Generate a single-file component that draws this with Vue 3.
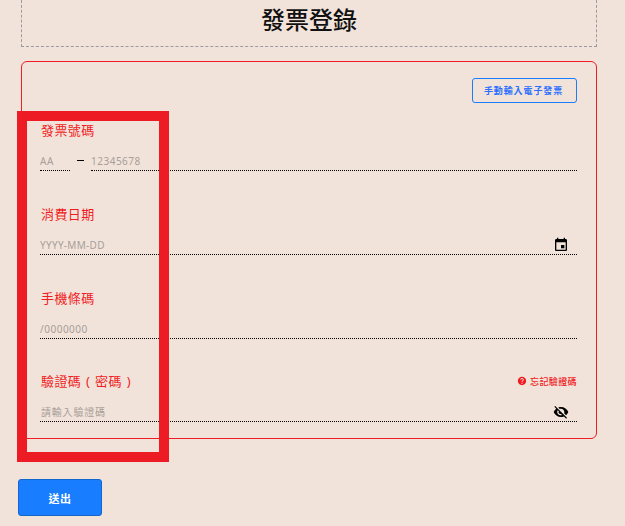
<template>
  <div class="page">
    <header class="title-box">
      <h1>發票登錄</h1>
    </header>

    <form class="card" @submit.prevent>
      <div class="card-top">
        <button type="button" class="manual-btn">手動輸入電子發票</button>
      </div>

      <div class="field field-first">
        <label>發票號碼</label>
        <div class="inv-row">
          <div class="line inv-track"><span class="hint">AA</span></div>
          <span class="dash"></span>
          <div class="line inv-num"><span class="hint">12345678</span></div>
        </div>
      </div>

      <div class="field">
        <label>消費日期</label>
        <div class="line">
          <span class="hint hint-date">YYYY-MM-DD</span>
          <svg class="icon" viewBox="0 0 24 24" width="16" height="16">
            <path d="M17 12h-5v5h5v-5zM16 1v2H8V1H6v2H5c-1.1 0-2 .9-2 2v14c0 1.1.9 2 2 2h14c1.100 0 2-.9 2-2V5c0-1.100-.9-2-2-2h-1V1h-2zm3 18H5V8h14v11z" />
          </svg>
        </div>
      </div>

      <div class="field">
        <label>手機條碼</label>
        <div class="line"><span class="hint">/0000000</span></div>
      </div>

      <div class="field field-last">
        <div class="label-row">
          <label class="paren-label">驗證碼 ( 密碼 )</label>
          <a class="forgot">
            <svg viewBox="0 0 24 24" width="10" height="10">
              <path d="M12 2C6.480 2 2 6.480 2 12s4.480 10 10 10 10-4.480 10-10S17.520 2 12 2zm1 17h-2v-2h2v2zm2.070-7.750l-.9.920C13.450 12.900 13 13.500 13 15h-2v-.5c0-1.100.45-2.100 1.170-2.830l1.240-1.260c.37-.36.590-.86.590-1.410 0-1.100-.9-2-2-2s-2 .9-2 2H8c0-2.210 1.790-4 4-4s4 1.790 4 4c0 .88-.36 1.680-.93 2.250z" />
            </svg>
            忘記驗證碼
          </a>
        </div>
        <div class="line">
          <span class="hint hint-cjk">請輸入驗證碼</span>
          <svg class="icon eye" viewBox="0 0 24 24" width="16" height="16">
            <path d="M12 7c2.760 0 5 2.240 5 5 0 .65-.13 1.260-.36 1.830l2.920 2.920c1.510-1.260 2.700-2.890 3.430-4.750-1.730-4.390-6-7.500-11-7.500-1.400 0-2.740.25-3.980.7l2.160 2.160C10.740 7.130 11.350 7 12 7zM2 4.270l2.280 2.280.46.46C3.080 8.300 1.780 10.020 1 12c1.730 4.390 6 7.500 11 7.500 1.550 0 3.030-.3 4.380-.84l.42.420L19.730 22 21 20.730 3.270 3 2 4.270zM7.530 9.800l1.550 1.550c-.05.21-.8.430-.8.650 0 1.660 1.340 3 3 3 .22 0 .44-.03.65-.08l1.550 1.550c-.67.330-1.410.53-2.200.53-2.760 0-5-2.240-5-5 0-.79.2-1.530.53-2.200z" />
          </svg>
        </div>
      </div>
    </form>

    <button type="button" class="submit">送出</button>

    <div class="highlight"></div>
  </div>
</template>

<script setup>
</script>

<style>
html,
body {
  margin: 0;
  background: #f1e3da;
}
</style>

<style scoped>
.page {
  position: relative;
  width: 625px;
  height: 526px;
  overflow: hidden;
  box-sizing: border-box;
  padding: 0 28px 0 21px;
  background: #f1e3da;
  font-family: "Noto Sans", "Noto Sans CJK TC", sans-serif;
}

.title-box {
  height: 47px;
  box-sizing: border-box;
  border: 1px dashed #9a9aa5;
  border-top: 0;
  display: flex;
  justify-content: center;
  align-items: flex-start;
}

h1 {
  margin: 2px 0 0;
  font-size: 24px;
  line-height: 36px;
  font-weight: 500;
  color: #111;
}

.card {
  margin-top: 14px;
  height: 378px;
  box-sizing: border-box;
  border: 1px solid #f01c24;
  border-radius: 6px;
  padding: 16px 19px 0 18px;
}

.card-top {
  display: flex;
  justify-content: flex-end;
  height: 26px;
}

.manual-btn {
  width: 105px;
  height: 25px;
  padding: 0 2px 0 0;
  box-sizing: border-box;
  border: 1px solid #1a7dff;
  border-radius: 3px;
  background: transparent;
  color: #2a6fff;
  font-family: inherit;
  font-size: 9px;
  font-weight: 700;
  letter-spacing: 0.9px;
}

.field {
  margin-top: 34px;
  height: 50px;
}

.field-first {
  margin-top: 16px;
}

.field-last {
  margin-top: 33px;
}

label {
  display: block;
  height: 20px;
  padding-left: 1px;
  font-size: 13px;
  line-height: 20px;
  letter-spacing: 0.4px;
  color: #f01c24;
}

.paren-label {
  word-spacing: 1px;
}

.label-row {
  display: flex;
  justify-content: space-between;
  align-items: center;
}

.forgot {
  display: flex;
  align-items: center;
  gap: 2px;
  font-size: 9px;
  font-weight: 500;
  letter-spacing: 0.4px;
  color: #f01c24;
}

.forgot svg {
  fill: #f01c24;
  margin-right: 1px;
}

.line {
  margin-top: 11px;
  height: 20px;
  box-sizing: border-box;
  border-bottom: 1px dotted #000;
  display: flex;
  align-items: center;
  justify-content: space-between;
}

.hint {
  margin-top: 2px;
  font-size: 10px;
  line-height: 19px;
  letter-spacing: 0.5px;
  color: #a89e98;
}

.hint-date {
  letter-spacing: 0.3px;
}

.hint-cjk {
  letter-spacing: 0.8px;
  padding-left: 1px;
}

.inv-row {
  display: flex;
  align-items: center;
}

.inv-track {
  width: 30px;
  flex: none;
}

.inv-num {
  flex: 1;
}

.dash {
  width: 7px;
  height: 1px;
  margin: 9px 7px 0 7px;
  background: #000;
  flex: none;
}

.icon {
  fill: #000;
  margin-right: 8px;
}

.submit {
  display: block;
  width: 84px;
  height: 37px;
  margin: 40px 0 0 -3px;
  padding: 0;
  box-sizing: border-box;
  border: 1px solid #1267cc;
  border-radius: 3px;
  background: #187dff;
  color: #fff;
  font-family: inherit;
  font-size: 11px;
  font-weight: 700;
  letter-spacing: 0.5px;
}

.highlight {
  position: absolute;
  left: 17px;
  top: 111px;
  width: 152px;
  height: 351px;
  box-sizing: border-box;
  border: 10px solid #ed1c24;
  pointer-events: none;
}
</style>
